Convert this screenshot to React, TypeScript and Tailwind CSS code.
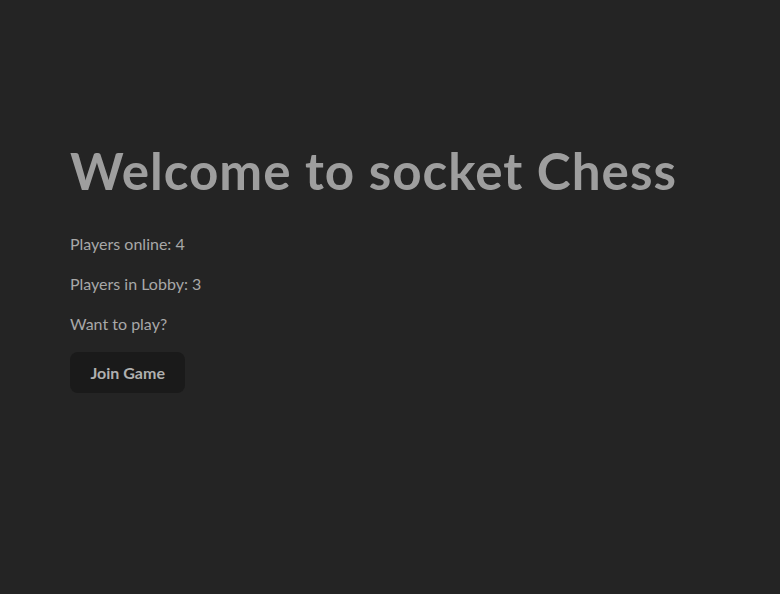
export default function App() {
  return (
    <div className="min-h-[594px] bg-[#242424] px-[70px] pt-[142px] font-['Lato',sans-serif] text-[#a8a8a8]">
      <h1 className="whitespace-nowrap text-[51.2px] font-bold leading-[1.1] tracking-[1px] text-[#9e9e9e]">Welcome to socket Chess</h1>
      <div className="mt-[34px] flex flex-col gap-4 text-base leading-6">
        <p>Players online: 4</p>
        <p>Players in Lobby: 3</p>
        <p>Want to play?</p>
      </div>
      <button className="mt-4 rounded-lg bg-[#1a1a1a] px-[20.5px] py-[8.5px] text-base font-bold text-[#b0b0b0]">
        Join Game
      </button>
    </div>
  )
}
